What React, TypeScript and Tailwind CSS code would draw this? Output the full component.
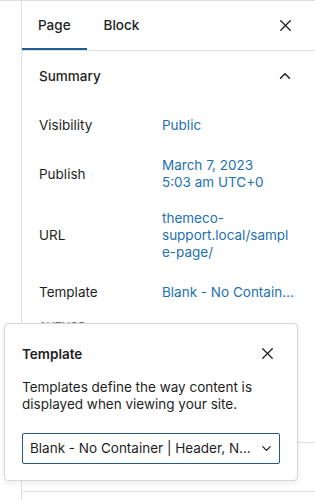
import { X, ChevronUp, ChevronDown } from "lucide-react";

const ROWS = [
  { label: "Visibility", height: "h-[48px]", lines: ["Public"] },
  { label: "Publish", height: "h-[50px]", lines: ["March 7, 2023", "5:03 am UTC+0"] },
  { label: "URL", height: "h-[72px]", lines: ["themeco-", "support.local/sampl", "e-page/"] },
];

export default function App() {
  return (
    <div className="relative h-[500px] w-[315px] overflow-hidden border-t border-[#e0e0e0] bg-white font-['Inter',sans-serif] text-[13.5px] text-[#1e1e1e]">
      <div className="ml-[21px] flex h-full flex-col border-l border-[#e0e0e0]">
        {/* tabs */}
        <div className="flex h-[50px] shrink-0 items-stretch justify-between border-b border-[#e0e0e0]">
          <div className="flex">
            <button className="px-4 font-medium shadow-[inset_0_-2px_0_#1f5f93]">Page</button>
            <button className="px-[17px] font-medium">Block</button>
          </div>
          <button className="mr-[12px] flex w-9 items-center justify-center">
            <X size={19} strokeWidth={1.6} />
          </button>
        </div>

        {/* summary */}
        <div className="flex h-[50px] shrink-0 items-center justify-between pl-[17px] pr-[12px]">
          <span className="font-medium">Summary</span>
          <span className="flex w-9 justify-center">
            <ChevronUp size={18} strokeWidth={2} />
          </span>
        </div>

        {ROWS.map((row) => (
          <div key={row.label} className={`flex shrink-0 items-center pl-[17px] ${row.height}`}>
            <span className="w-[123px]">{row.label}</span>
            <span className="flex flex-col leading-[17px] text-[#2271b1]">
              {row.lines.map((l) => (
                <span key={l}>{l}</span>
              ))}
            </span>
          </div>
        ))}

        <div className="flex h-[42px] shrink-0 items-center pl-[17px]">
          <span className="w-[123px]">Template</span>
          <span className="w-[133px] truncate text-[#2271b1]">Blank - No Container | Header, Footer</span>
        </div>

        <div className="h-[130px] shrink-0 border-b border-[#e0e0e0] pl-[17px] pt-[5px] text-[11px] font-medium uppercase text-[#757575]">
          Author
        </div>
        <div className="h-[49px] shrink-0 border-b border-[#e0e0e0]" />
      </div>

      {/* template popover */}
      <div className="absolute left-[4px] top-[322px] flex h-[158px] w-[294px] flex-col rounded-[4px] border border-[#d6d6d6] bg-white px-[17px] shadow-[0_2px_6px_rgba(0,0,0,0.08)]">
        <div className="flex items-center justify-between pt-[20px] leading-[16px]">
          <span className="font-semibold">Template</span>
          <X size={19} strokeWidth={1.6} className="mr-[3px]" />
        </div>
        <p className="mt-[16px] leading-[17px]">
          Templates define the way content is displayed when viewing your site.
        </p>
        <div className="mt-[20px] flex h-[31px] items-center justify-between rounded-[2px] border-[1.5px] border-[#245a86] pl-[7px] pr-[5px]">
          <span className="truncate pr-2">Blank - No Container | Header, Navbar, Footer</span>
          <ChevronDown size={15} strokeWidth={2} className="shrink-0" />
        </div>
      </div>
    </div>
  );
}
